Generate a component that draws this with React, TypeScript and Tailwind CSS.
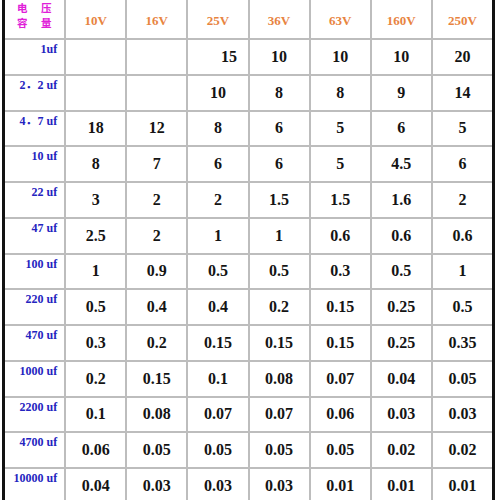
const volts = ["10V", "16V", "25V", "36V", "63V", "160V", "250V"]

const rows: { label: string; values: string[] }[] = [
  { label: "1uf", values: ["", "", "15", "10", "10", "10", "20"] },
  { label: "2．2 uf", values: ["", "", "10", "8", "8", "9", "14"] },
  { label: "4．7 uf", values: ["18", "12", "8", "6", "5", "6", "5"] },
  { label: "10 uf", values: ["8", "7", "6", "6", "5", "4.5", "6"] },
  { label: "22 uf", values: ["3", "2", "2", "1.5", "1.5", "1.6", "2"] },
  { label: "47 uf", values: ["2.5", "2", "1", "1", "0.6", "0.6", "0.6"] },
  { label: "100 uf", values: ["1", "0.9", "0.5", "0.5", "0.3", "0.5", "1"] },
  { label: "220 uf", values: ["0.5", "0.4", "0.4", "0.2", "0.15", "0.25", "0.5"] },
  { label: "470 uf", values: ["0.3", "0.2", "0.15", "0.15", "0.15", "0.25", "0.35"] },
  { label: "1000 uf", values: ["0.2", "0.15", "0.1", "0.08", "0.07", "0.04", "0.05"] },
  { label: "2200 uf", values: ["0.1", "0.08", "0.07", "0.07", "0.06", "0.03", "0.03"] },
  { label: "4700 uf", values: ["0.06", "0.05", "0.05", "0.05", "0.05", "0.02", "0.02"] },
  { label: "10000 uf", values: ["0.04", "0.03", "0.03", "0.03", "0.01", "0.01", "0.01"] },
]

export default function App() {
  return (
    <div className="w-[500px] h-[500px] overflow-hidden bg-white font-['Liberation_Serif','Noto_Sans_CJK_SC',serif]">
      <div className="ml-[2px] w-[493px] border-x-[3px] border-[#111]">
        <div className="grid grid-cols-8 grid-rows-[38px] auto-rows-[33.75px] gap-[2px] bg-[#bdbdbd]">
          {/* header: 电压 / 容量 */}
          <div className="bg-white pl-[12px]">
            <div className="grid grid-cols-[12px_12px] gap-x-[12px] font-['Noto_Sans_CJK_SC',sans-serif] text-[10.5px] font-bold leading-[15px] text-[#e020d8]">
              <span>电</span>
              <span>压</span>
              <span>容</span>
              <span>量</span>
            </div>
          </div>
          {volts.map((v) => (
            <div
              key={v}
              className="bg-white flex items-center justify-center pt-[4px] text-[13px] font-bold text-[#e8843f]"
            >
              {v}
            </div>
          ))}

          {rows.map((row) => (
            <>
              <div
                key={row.label}
                className="bg-white text-right pr-[7px] pt-[3px] whitespace-nowrap text-[12px] font-bold leading-[13px] text-[#2424c0]"
              >
                {row.label}
              </div>
              {row.values.map((val, i) => (
                <div
                  key={row.label + i}
                  className={
                    "bg-white flex items-center justify-center text-[16px] font-bold text-[#141414] " +
                    (row.label === "1uf" && i === 2 ? "pl-[22px]" : "")
                  }
                >
                  {val}
                </div>
              ))}
            </>
          ))}
        </div>
      </div>
    </div>
  )
}
